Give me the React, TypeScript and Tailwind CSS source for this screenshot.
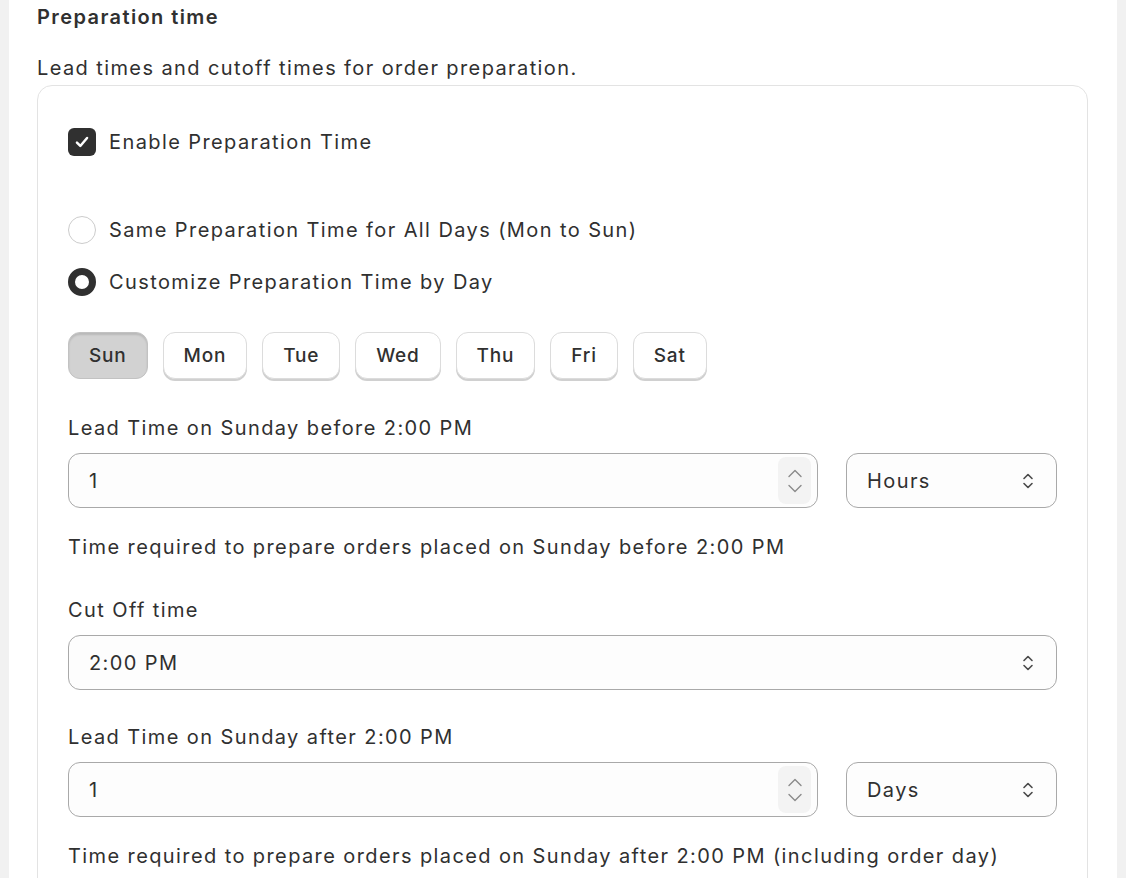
import React from 'react';

const days = ['Sun', 'Mon', 'Tue', 'Wed', 'Thu', 'Fri', 'Sat'];

const Chevrons = () => (
  <svg width="16" height="20" viewBox="0 0 16 20" fill="none" stroke="#4a4a4a" strokeWidth="1.6" strokeLinecap="round" strokeLinejoin="round">
    <path d="M4 7.5 L8 3.5 L12 7.5" />
    <path d="M4 12.5 L8 16.5 L12 12.5" />
  </svg>
);

const Spinner = () => (
  <div className="flex h-[47px] w-[33px] flex-col items-center justify-center gap-[6px] rounded-[8px] bg-[#f3f3f3]">
    <svg width="16" height="9" viewBox="0 0 16 9" fill="none" stroke="#8a8a8a" strokeWidth="1.4" strokeLinecap="round" strokeLinejoin="round">
      <path d="M2 7.5 L8 1.5 L14 7.5" />
    </svg>
    <svg width="16" height="9" viewBox="0 0 16 9" fill="none" stroke="#8a8a8a" strokeWidth="1.4" strokeLinecap="round" strokeLinejoin="round">
      <path d="M2 1.5 L8 7.5 L14 1.5" />
    </svg>
  </div>
);

const NumberField = ({ value }: { value: string }) => (
  <div className="flex h-[55px] flex-1 items-center justify-between rounded-[12px] border border-[#a9a9a9] bg-[#fdfdfd] pl-[20px] pr-[6px]">
    <span>{value}</span>
    <Spinner />
  </div>
);

const SelectField = ({ value, className }: { value: string; className: string }) => (
  <div className={`flex h-[55px] items-center justify-between rounded-[12px] border border-[#a9a9a9] bg-[#fdfdfd] pl-[20px] pr-[20px] ${className}`}>
    <span>{value}</span>
    <Chevrons />
  </div>
);

const Radio = ({ checked, label }: { checked: boolean; label: string }) => (
  <div className="flex h-[28px] items-center gap-[13px]">
    {checked ? (
      <span className="h-[28px] w-[28px] rounded-full border-[7px] border-[#303030] bg-white" />
    ) : (
      <span className="h-[28px] w-[28px] rounded-full border-[1.5px] border-[#cccccc] bg-white" />
    )}
    <span>{label}</span>
  </div>
);

export default function App() {
  return (
    <div className="min-h-screen bg-[#f1f1f1] px-[9px]" style={{ fontFamily: 'Inter, "Noto Sans", sans-serif' }}>
      <div className="min-h-[878px] bg-white pl-[28px] pr-[29px] pt-[3px] text-[20px] leading-[28px] tracking-[1.4px] text-[#303030]">
        <h2 className="font-semibold">Preparation time</h2>
        <p className="mt-[23px]">Lead times and cutoff times for order preparation.</p>

        <div className="mt-[3px] rounded-[15px] border border-[#e3e3e3] px-[30px] pb-[40px] pt-[42px]">
          {/* Enable checkbox */}
          <div className="flex h-[28px] items-center gap-[13px]">
            <span className="flex h-[28px] w-[28px] items-center justify-center rounded-[6px] bg-[#303030]">
              <svg width="18" height="18" viewBox="0 0 16 16" fill="none" stroke="white" strokeWidth="2.2" strokeLinecap="round" strokeLinejoin="round">
                <path d="M3.5 8.5 L6.5 11.5 L12.5 4.5" />
              </svg>
            </span>
            <span>Enable Preparation Time</span>
          </div>

          {/* Mode radios */}
          <div className="mt-[60px] flex flex-col gap-[24px]">
            <Radio checked={false} label="Same Preparation Time for All Days (Mon to Sun)" />
            <Radio checked label="Customize Preparation Time by Day" />
          </div>

          {/* Day tabs */}
          <div className="mt-[36px] flex gap-[15px]">
            {days.map((d) =>
              d === 'Sun' ? (
                <button
                  key={d}
                  className="h-[47px] rounded-[12px] border border-[#c2c2c2] bg-[#d2d2d2] px-[20px] text-[19px] font-medium tracking-[0.8px] text-[#303030] shadow-[inset_0_2px_2px_rgba(0,0,0,0.12)]"
                >
                  {d}
                </button>
              ) : (
                <button
                  key={d}
                  className="h-[47px] rounded-[12px] border border-[#dcdcdc] bg-white px-[20px] text-[19px] font-medium tracking-[0.8px] text-[#303030] shadow-[0_2px_0_#d0d0d0]"
                >
                  {d}
                </button>
              )
            )}
          </div>

          {/* Lead time before */}
          <label className="mt-[35px] block">Lead Time on Sunday before 2:00 PM</label>
          <div className="mt-[11px] flex gap-[28px]">
            <NumberField value="1" />
            <SelectField value="Hours" className="w-[211px]" />
          </div>
          <p className="mt-[25px]">Time required to prepare orders placed on Sunday before 2:00 PM</p>

          {/* Cut off */}
          <label className="mt-[35px] block">Cut Off time</label>
          <div className="mt-[11px] flex">
            <SelectField value="2:00 PM" className="flex-1" />
          </div>

          {/* Lead time after */}
          <label className="mt-[33px] block">Lead Time on Sunday after 2:00 PM</label>
          <div className="mt-[11px] flex gap-[28px]">
            <NumberField value="1" />
            <SelectField value="Days" className="w-[211px]" />
          </div>
          <p className="mt-[25px]">Time required to prepare orders placed on Sunday after 2:00 PM (including order day)</p>
        </div>
      </div>
    </div>
  );
}
